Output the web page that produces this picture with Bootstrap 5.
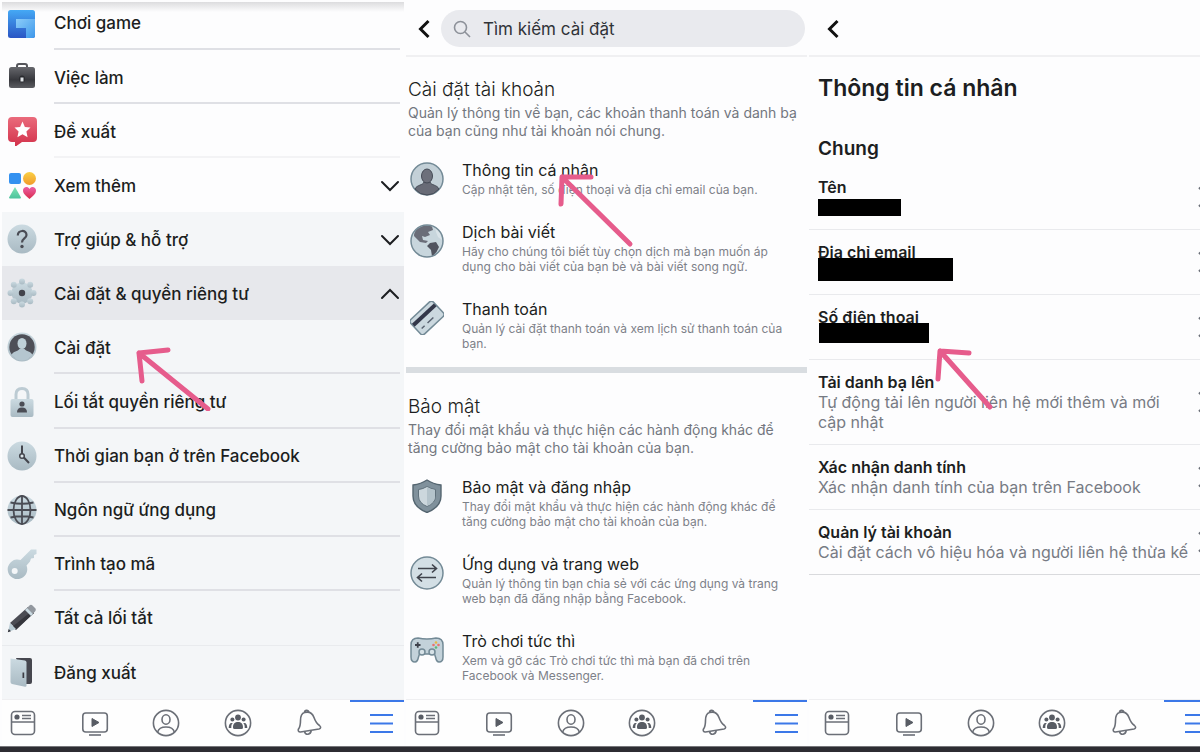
<!DOCTYPE html>
<html lang="vi">
<head>
<meta charset="utf-8">
<meta name="viewport" content="width=device-width, initial-scale=1">
<title>Cài đặt Facebook</title>
<link href="https://cdn.jsdelivr.net/npm/bootstrap@5.3.0/dist/css/bootstrap.min.css" rel="stylesheet">
<style>
  body { font-family: Inter, "Liberation Sans", sans-serif; color: #1c1e21; background: #fdfdfe; }
  a, a:hover { color: inherit; text-decoration: none; }
  .screens { display: grid; grid-template-columns: minmax(0, 402fr) minmax(0, 401fr) minmax(0, 391fr); gap: 2px; padding: 0 0 0 2px; }
  .screen-pane { min-width: 0; }
  .baseline-strip { height: 6px; background: #2d2c32; border-top: 1px solid #77777b; }
  .plain-btn { border: 0; background: none; padding: 0; color: inherit; text-align: left; }
  .pointer-arrow { position: absolute; z-index: 2; pointer-events: none; fill: none; stroke: #e65c8c; stroke-width: 5; stroke-linecap: round; stroke-linejoin: round; }

  /* menu screen */
  .menu-pane { margin-top: 2px; background: linear-gradient(#dcdcde, #fdfdfe 10px); }
  .menu-row { position: relative; flex: 1 1 54px; padding-left: 5px; font-size: 17px; line-height: 24px; width: 100%; }
  .menu-first { flex: 0 0 48px; }
  .menu-row > svg { width: 30px; height: 30px; flex: none; }
  .menu-text { flex: 1; display: flex; align-items: center; align-self: stretch; margin-left: 17px; margin-right: 4px; padding-top: 3px; border-bottom: 2px solid transparent; font-weight: 500; }
  .menu-first .menu-text { padding: 0 0 4px; }
  .menu-first > svg { margin-bottom: 5px; }
  .ruled .menu-text { border-bottom-color: #dfe0e5; }
  .ruled-faint .menu-text { border-bottom-color: #f3f3f5; }
  .menu-gray { background: #f4f6f8; }
  .menu-open { background: #e7e8ec; }
  .menu-logout { border-top: 1px solid #e9ebee; }
  .chev { width: 20px; height: 12px; fill: none; stroke: #1c1e21; stroke-width: 2; stroke-linecap: round; margin-left: auto; }
  .arrow-menu { left: 132px; top: 25px; }

  /* settings screens */
  .top-bar { height: 57px; border-bottom: 2px solid #f0f0f2; padding: 2px 2px 0 9px; }
  .back-btn svg { display: block; width: 18px; height: 22px; fill: none; stroke: #111; stroke-width: 3; }
  .search-pill { background: #e9eaee; border-radius: 19px; height: 37px; padding: 0 12px; margin-left: 8px; }
  .search-pill input { border: 0; background: none; outline: 0; width: 100%; font-size: 17px; color: #303338; padding: 2px 0 0 12px; }
  .search-pill input::placeholder { color: #303338; opacity: 1; }
  .settings-block { padding: 20px 0 16px 2px; }
  .top-bar + .settings-block { padding-top: 19px; }
  .block-title { font-size: 19px; line-height: 28px; font-weight: 300; margin: 0; }
  .block-desc { font-size: 14px; line-height: 18px; color: #73777f; margin: 0 0 18px; padding-right: 6px; }
  .set-item { position: relative; display: flex; gap: 20px; padding-left: 2px; margin-bottom: 23px; }
  .set-item:last-child { margin-bottom: 0; }
  .set-item > svg:first-child { width: 34px; height: 34px; flex: none; margin-top: 4px; margin-right: -2px; }
  .item-title { display: block; font-size: 16px; line-height: 24px; }
  .item-note { display: block; font-size: 12px; line-height: 15px; color: #7d8189; max-width: 336px; }
  .thick-rule { height: 6px; background: #d9dde1; }
  .arrow-info { left: 146px; top: 10px; }

  /* personal information screen */
  .info-pane { overflow: hidden; }
  .info-pane .top-bar { padding-left: 15px; }
  .page-title { font-size: 23px; line-height: 32px; font-weight: 600; margin: 15px 0 33px 9px; }
  .group-title { font-size: 19px; line-height: 24px; font-weight: 600; margin: 0 0 4px 9px; }
  .info-row { position: relative; display: flex; align-items: center; padding: 12px 0 12px 9px; border-bottom: 1px solid #e9eaed; font-size: 16px; line-height: 20px; }
  .info-row:last-child { border-color: #d9dadd; }
  .info-name { display: block; font-weight: 600; }
  .info-value { display: block; min-height: 20px; color: #777b84; }
  .redacted { display: block; background: #000; height: 17px; width: 83px; margin-top: 2px; }
  .redacted-mail { height: 23px; width: 135px; margin: -4px 0 1px; }
  .redacted-phone { height: 20px; width: 110px; margin: -4px 0 4px 1px; }
  .info-row > svg:last-child { width: 12px; height: 24px; flex: none; margin-right: -10px; fill: none; stroke: #6c7079; stroke-width: 2; }
  .info-row .arrow-phone { left: 124px; top: 49px; }

  /* tab bar */
  .tab-strip { height: 47px; padding: 0 9px 0 7px; border-top: 1px solid #efeff1; background: linear-gradient(#3c78e8, #3c78e8) right top / 54px 2px no-repeat #fefefe; }
  .settings-pane .tab-strip { padding-right: 7px; }
  .tab-strip svg { display: block; width: 28px; height: 28px; fill: none; stroke: #6b6f77; stroke-width: 1.6; }
  .tab-strip .tab-on { stroke: #3c78e8; stroke-width: 2; }
  .info-pane .tab-strip { margin-right: -10px; padding-left: 14px; padding-right: 0; background-size: 46px 2px; }
</style>
</head>
<body>
<svg width="0" height="0" class="position-absolute" aria-hidden="true">
  <defs>
    <linearGradient id="steel" x1="0" y1="0" x2="0" y2="1"><stop offset="0" stop-color="#cbdae1"/><stop offset="1" stop-color="#a9bac3"/></linearGradient>
    <linearGradient id="coal" x1="0" y1="0" x2="0" y2="1"><stop offset="0" stop-color="#66676c"/><stop offset=".6" stop-color="#37383d"/><stop offset="1" stop-color="#5b5c61"/></linearGradient>
    <linearGradient id="red" x1="0" y1="0" x2="0" y2="1"><stop offset="0" stop-color="#ea6b7c"/><stop offset="1" stop-color="#d2304a"/></linearGradient>
    <linearGradient id="blue" x1="0" y1="0" x2="0" y2="1"><stop offset="0" stop-color="#45a9f5"/><stop offset="1" stop-color="#2a55c4"/></linearGradient>
    <linearGradient id="sky" x1="0" y1="0" x2="1" y2="1"><stop offset="0" stop-color="#8ccdfa"/><stop offset="1" stop-color="#3d97ea"/></linearGradient>
    <linearGradient id="gold" x1="0" y1="0" x2="0" y2="1"><stop offset="0" stop-color="#fad045"/><stop offset="1" stop-color="#f19a2c"/></linearGradient>
    <linearGradient id="mint" x1="0" y1="0" x2="0" y2="1"><stop offset="0" stop-color="#7fe3b4"/><stop offset="1" stop-color="#4cc39c"/></linearGradient>
    <linearGradient id="rose" x1="0" y1="0" x2="0" y2="1"><stop offset="0" stop-color="#ec5fa6"/><stop offset="1" stop-color="#d92c4c"/></linearGradient>
    <symbol id="t-feed" viewBox="0 0 28 28"><rect x="2.500" y="2.500" width="23" height="23" rx="3.500"/><path d="M2.500 13H25.500M13 6.500H22M13 9.500H22"/><circle cx="8" cy="8" r="2.600" fill="#585c64" stroke="none"/></symbol>
    <symbol id="t-watch" viewBox="0 0 28 28"><rect x="1.800" y="4" width="24.500" height="19" rx="3"/><path d="M8 26H20"/><path d="M11 9.500L18 13.500 11 17.500Z" fill="#585c64" stroke="#585c64" stroke-width="1"/></symbol>
    <symbol id="t-user" viewBox="0 0 28 28"><circle cx="14" cy="14" r="12.600"/><ellipse cx="14" cy="10.500" rx="4" ry="4.700"/><path d="M5.700 23C6.500 19.500 9.500 18 14 18S21.500 19.500 22.300 23"/></symbol>
    <symbol id="t-group" viewBox="0 0 28 28"><circle cx="14" cy="14" r="12.600"/><g fill="#585c64" stroke="none"><circle cx="14" cy="8.500" r="2.900"/><circle cx="8.400" cy="10.500" r="2"/><circle cx="19.600" cy="10.500" r="2"/><path d="M9 18.500C9 14.500 11 13 14 13S19 14.500 19 18.500Q19 20 17.500 20H10.500Q9 20 9 18.500ZM7.800 14C5.500 14 4.800 16 4.700 19H7.300C7.300 16.500 7.400 15.200 8.800 14ZM20.200 14C22.500 14 23.200 16 23.300 19H20.700C20.700 16.500 20.600 15.200 19.200 14Z"/></g></symbol>
    <symbol id="t-bell" viewBox="0 0 28 28"><path d="M9.500 3.600C14 2.300 17.500 4.500 19 8.500C20.400 12.500 21.500 14.500 24.500 16.500C26.300 18 25.800 19.500 24 20L5.500 23C3.500 23.200 2.700 21.500 3.500 20C5.500 17.500 5.500 15.500 5.500 11.500C5.500 7.500 6.700 4.500 9.500 3.600ZM9.500 3.500C9.300 .8 13.500 .6 13.800 3.300M9.500 22.500C10.500 26.500 15.700 26.200 16.300 21.400"/></symbol>
    <symbol id="t-menu" viewBox="0 0 28 28"><path d="M3 6H26M3 14.500H26M3 23H26"/></symbol>
    <symbol id="back" viewBox="0 0 18 22"><path d="M13.500 3L5.500 11L13.500 19"/></symbol>
    <symbol id="right" viewBox="0 0 12 24"><path d="M1 2.500L10 12L1 21.500"/></symbol>
    <symbol id="down" viewBox="0 0 20 12"><path d="M2 2L10 10L18 2"/></symbol>
  </defs>
</svg>

<main class="screens">
  <!-- Menu -->
  <section class="screen-pane menu-pane d-flex flex-column" aria-label="Menu">
    <nav class="d-flex flex-column flex-fill">
      <a href="#" class="menu-row menu-first ruled d-flex align-items-center">
        <svg viewBox="0 0 30 30"><rect x="1" y="1" width="27" height="28" rx="2.500" fill="url(#blue)"/><path d="M9 10H28V26.500Q28 29 25.500 29H19V19H9Z" fill="url(#sky)"/></svg>
        <span class="menu-text">Chơi game</span></a>
      <a href="#" class="menu-row ruled d-flex align-items-center">
        <svg viewBox="0 0 30 30"><path d="M10 6V4Q10 2 12 2H18Q20 2 20 4V6" fill="none" stroke="#55565b" stroke-width="2"/><rect x="2" y="5" width="26" height="21" rx="2.500" fill="url(#coal)"/><ellipse cx="15" cy="17" rx="3" ry="3.500" fill="#2a2b2f"/><path d="M13.500 15.500h3v4h-3z" fill="#dfe3e6"/></svg>
        <span class="menu-text">Việc làm</span></a>
      <a href="#" class="menu-row ruled-faint d-flex align-items-center">
        <svg viewBox="0 0 30 30"><path d="M5 1H26Q30 1 30 5V22Q30 26 26 26H15L8 31V26H5Q1 26 1 22V5Q1 1 5 1Z" fill="url(#red)"/><path d="M15.500 5.500L17.900 11 23.500 11.600 19.400 15.500 20.600 21.200 15.500 18.200 10.400 21.200 11.600 15.500 7.500 11.600 13.100 11Z" fill="#fff"/></svg>
        <span class="menu-text">Đề xuất</span></a>
      <button type="button" class="plain-btn menu-row d-flex align-items-center">
        <svg viewBox="0 0 30 30"><rect x="2" y="3" width="12" height="11" rx="2" fill="#3491f0"/><circle cx="22.500" cy="8.500" r="6.500" fill="url(#gold)"/><path d="M8 17L14 27.500Q14 28.500 13 28.500H3Q2 28.500 2 27.500Z" fill="url(#mint)"/><path d="M22.500 19C20.500 15.500 16 17 16 20.500C16 24 19.500 26 22.500 29C25.500 26 29 24 29 20.500C29 17 24.500 15.500 22.500 19Z" fill="url(#rose)"/></svg>
        <span class="menu-text">Xem thêm<svg class="chev"><use href="#down"/></svg></span></button>
      <button type="button" class="plain-btn menu-row menu-gray d-flex align-items-center">
        <svg viewBox="0 0 30 30"><circle cx="15" cy="15" r="14.500" fill="url(#steel)"/><path d="M10.800 11.500C10.800 5.500 19.500 5.600 19.500 11C19.500 14.500 15 14.500 15 18.500" fill="none" stroke="#4b4d55" stroke-width="2.200"/><circle cx="15" cy="22.500" r="1.700" fill="#4b4d55"/></svg>
        <span class="menu-text">Trợ giúp &amp; hỗ trợ<svg class="chev"><use href="#down"/></svg></span></button>
      <button type="button" class="plain-btn menu-row menu-open d-flex align-items-center" aria-expanded="true">
        <svg viewBox="0 0 30 30"><g fill="url(#steel)"><circle cx="15" cy="15" r="10.500"/><circle cx="15" cy="3.500" r="3"/><circle cx="15" cy="26.500" r="3"/><circle cx="3.500" cy="15" r="3"/><circle cx="26.500" cy="15" r="3"/><circle cx="6.800" cy="6.800" r="3"/><circle cx="23.200" cy="6.800" r="3"/><circle cx="6.800" cy="23.200" r="3"/><circle cx="23.200" cy="23.200" r="3"/></g><circle cx="15" cy="15" r="3.200" fill="#42444c"/></svg>
        <span class="menu-text">Cài đặt &amp; quyền riêng tư<svg class="chev" viewBox="0 0 20 12"><path d="M2 10L10 2L18 10"/></svg></span></button>
      <a href="#" class="menu-row menu-gray ruled d-flex align-items-center">
        <svg viewBox="0 0 30 30"><circle cx="15" cy="15" r="14.500" fill="url(#steel)"/><circle cx="15" cy="15" r="12.700" fill="#4e4f57"/><ellipse cx="15" cy="11.500" rx="4.500" ry="5.500" fill="#bfd0d8"/><path d="M4.500 23C6 19 11 19.500 12.500 17H17.500C19 19.500 24 19 25.500 23Q21 28.500 15 28.500T4.500 23Z" fill="#b5c6cf"/></svg>
        <span class="menu-text">Cài đặt</span>
        <svg class="pointer-arrow arrow-menu" style="width:80px;height:66px" viewBox="0 0 80 66"><path d="M34 5L5 8L8 36M5 8L74 64"/></svg></a>
      <a href="#" class="menu-row menu-gray ruled d-flex align-items-center">
        <svg viewBox="0 0 30 30"><path d="M9 13V7.500Q9 1.500 15 1.500T21 7.500V13" fill="none" stroke="#bccbd3" stroke-width="3"/><rect x="3.500" y="12" width="23" height="18" rx="2" fill="url(#steel)"/><circle cx="15" cy="17" r="2.600" fill="#4b4d55"/><path d="M10 25.500Q10 20.500 15 20.500T20 25.500Z" fill="#4b4d55"/></svg>
        <span class="menu-text">Lối tắt quyền riêng tư</span></a>
      <a href="#" class="menu-row menu-gray ruled d-flex align-items-center">
        <svg viewBox="0 0 30 30"><circle cx="15" cy="15" r="14.500" fill="url(#steel)"/><path d="M15 4.500V14.500L22 22" fill="none" stroke="#44464e" stroke-width="2"/><circle cx="15" cy="15" r="2.300" fill="#dbe5ea" stroke="#44464e" stroke-width="1.500"/></svg>
        <span class="menu-text">Thời gian bạn ở trên Facebook</span></a>
      <a href="#" class="menu-row menu-gray ruled d-flex align-items-center">
        <svg viewBox="0 0 30 30"><circle cx="15" cy="15" r="14.500" fill="url(#steel)"/><g fill="none" stroke="#4a4c54" stroke-width="1.800"><ellipse cx="15" cy="15" rx="8.500" ry="14"/><path d="M15 .5V29.500M.5 15H29.500M3.500 7.500Q15 10 26.500 7.500M3.500 22.500Q15 20 26.500 22.500"/></g></svg>
        <span class="menu-text">Ngôn ngữ ứng dụng</span></a>
      <a href="#" class="menu-row menu-gray ruled d-flex align-items-center">
        <svg viewBox="0 0 30 30"><path d="M24 .5H29.500V5L27 6V9L24 9.500 23 12.500 19.500 16.500A9.800 9.800 0 1 1 13.500 11Z" fill="url(#steel)"/><circle cx="7.700" cy="22" r="3" fill="#f4f6f8"/></svg>
        <span class="menu-text">Trình tạo mã</span></a>
      <a href="#" class="menu-row menu-gray d-flex align-items-center">
        <svg viewBox="0 0 30 30"><path d="M3 20L21 4L27 10L9 26Z" fill="#4b4c54"/><path d="M5 24L25 8L27 10L9 27Z" fill="#35363d"/><path d="M19.500 5.500L22.500 2.500Q24 1 26 3L28.500 5.500Q29.500 7 28 8.500L25.500 11Z" fill="#92989f"/><path d="M18 7L20 5L26 11L24 13Z" fill="#c9d9e1"/><path d="M3 20L9 26L1 29Z" fill="#b9cbd4"/><path d="M1.700 26L4 28.200 .8 29.200Z" fill="#35363d"/></svg>
        <span class="menu-text">Tất cả lối tắt</span></a>
      <a href="#" class="menu-row menu-gray menu-logout d-flex align-items-center">
        <svg viewBox="0 0 30 30"><path d="M9 1H23Q25 1 25 3V25Q25 27 23 27H18Z" fill="#46474f"/><path d="M3.500 1.500L18 3.500Q19.500 4 19.500 5.500V28.500Q19.500 30 18 29.700L5 27Q3.500 26.500 3.500 25Z" fill="url(#steel)"/><path d="M15.500 15.500H17.200V21H15.500Z" fill="#3c3d44"/></svg>
        <span class="menu-text">Đăng xuất</span></a>
    </nav>
    <nav class="tab-strip d-flex justify-content-between align-items-center" aria-label="Thanh tab">
      <a href="#" aria-label="Bảng tin"><svg><use href="#t-feed"/></svg></a><a href="#" aria-label="Watch"><svg><use href="#t-watch"/></svg></a><a href="#" aria-label="Trang cá nhân"><svg><use href="#t-user"/></svg></a><a href="#" aria-label="Nhóm"><svg><use href="#t-group"/></svg></a><a href="#" aria-label="Thông báo"><svg><use href="#t-bell"/></svg></a><a href="#" aria-label="Menu"><svg class="tab-on"><use href="#t-menu"/></svg></a>
    </nav>
  </section>

  <!-- Settings -->
  <section class="screen-pane settings-pane d-flex flex-column" aria-label="Cài đặt">
    <header class="top-bar d-flex align-items-center">
      <button type="button" class="plain-btn back-btn" aria-label="Quay lại"><svg><use href="#back"/></svg></button>
      <label class="search-pill d-flex align-items-center flex-fill">
        <svg width="18" height="18" viewBox="0 0 18 18" class="flex-shrink-0" fill="none" stroke="#8d9199" stroke-width="1.600"><circle cx="7.500" cy="7.500" r="6"/><path d="M12 12L17 17"/></svg>
        <input type="text" placeholder="Tìm kiếm cài đặt" aria-label="Tìm kiếm cài đặt">
      </label>
    </header>
    <div class="settings-block">
      <h2 class="block-title">Cài đặt tài khoản</h2>
      <p class="block-desc pe-0">Quản lý thông tin về bạn, các khoản thanh toán và danh bạ của bạn cũng như tài khoản nói chung.</p>
      <div>
        <a href="#" class="set-item">
          <svg viewBox="0 0 34 34"><circle cx="17" cy="17" r="16" fill="#c3d0d7" stroke="#738a96" stroke-width="1.500"/><path d="M5 27C7 22.500 13 23.500 14 20H20C21 23.500 27 22.500 29 27Q24 33 17 33T5 27Z" fill="#686b76" stroke="#454b56"/><ellipse cx="17" cy="14" rx="5.500" ry="7" fill="#6d707b" stroke="#454b56"/></svg>
          <span><span class="item-title">Thông tin cá nhân</span><span class="item-note">Cập nhật tên, số điện thoại và địa chỉ email của bạn.</span></span>
          <svg class="pointer-arrow arrow-info" style="width:80px;height:80px" viewBox="0 0 80 80"><path d="M37 9H8L7 36M8 9L76 76"/></svg></a>
        <a href="#" class="set-item">
          <svg viewBox="0 0 34 34"><circle cx="17" cy="17" r="16" fill="#c8d6dd"/><path d="M8 4.500Q14 0 22 2.500L23 6 18 8 20 11 15 13 12 12 13 16 18 17 16 19 10 18 4 12Q4 7 8 4.500Z" fill="#6a6d78"/><path d="M20 19L26 18 29 23Q27 29 22 32.500L21 26 17 22Z" fill="#51545f"/><path d="M25 3Q31 8 32 16L28 13 26 8Z" fill="#dae4e9"/><circle cx="17" cy="17" r="16" fill="none" stroke="#738a96" stroke-width="1.500"/></svg>
          <span><span class="item-title">Dịch bài viết</span><span class="item-note">Hãy cho chúng tôi biết tùy chọn dịch mà bạn muốn áp<br>dụng cho bài viết của bạn bè và bài viết song ngữ.</span></span></a>
        <a href="#" class="set-item">
          <svg viewBox="0 0 34 34"><g transform="rotate(-43 17 17)"><rect x="1.500" y="7" width="31" height="20" rx="3" fill="#cbd8df" stroke="#738a96" stroke-width="1.500"/><path d="M2 11H32V15H2Z" fill="#34384a"/><path d="M6 21H10M14 21H22" stroke="#596270" stroke-width="1.500"/></g></svg>
          <span><span class="item-title">Thanh toán</span><span class="item-note">Quản lý cài đặt thanh toán và xem lịch sử thanh toán của<br>bạn.</span></span></a>
      </div>
    </div>
    <div class="thick-rule"></div>
    <div class="settings-block">
      <h2 class="block-title">Bảo mật</h2>
      <p class="block-desc">Thay đổi mật khẩu và thực hiện các hành động khác để tăng cường bảo mật cho tài khoản của bạn.</p>
      <div>
        <a href="#" class="set-item">
          <svg viewBox="0 0 34 34"><path d="M17 1Q23 5 31 6V17Q31 28 17 33.500Q3 28 3 17V6Q11 5 17 1Z" fill="#80919c" stroke="#546570" stroke-width="1.400"/><path d="M17 7.500Q21 10 25.500 10.500V17Q25.500 24 17 27.500Q8.500 24 8.500 17V10.500Q13 10 17 7.500Z" fill="#ccd7dd" stroke="#60717c"/><path d="M17 8V27Q25 23.500 25 17V11Q21 10.500 17 8Z" fill="#b4c3cb"/></svg>
          <span><span class="item-title">Bảo mật và đăng nhập</span><span class="item-note">Thay đổi mật khẩu và thực hiện các hành động khác để<br>tăng cường bảo mật cho tài khoản của bạn.</span></span></a>
        <a href="#" class="set-item">
          <svg viewBox="0 0 34 34"><circle cx="17" cy="17" r="16" fill="#d3dfe5" stroke="#738a96" stroke-width="1.500"/><path d="M8 12.500H26M22 8.500L26.500 12.500 22 16.500M26 21.500H8M12 17.500L7.500 21.500 12 25.500" fill="none" stroke="#3f434c" stroke-width="1.600"/></svg>
          <span><span class="item-title">Ứng dụng và trang web</span><span class="item-note">Quản lý thông tin bạn chia sẻ với các ứng dụng và trang<br>web bạn đã đăng nhập bằng Facebook.</span></span></a>
        <a href="#" class="set-item">
          <svg viewBox="0 0 34 34"><path d="M8 5Q17 7 26 5Q33 5 33 12V24Q33 29 29 29Q26.500 29 25.500 24L24.500 21H9.500L8.500 24Q7.500 29 5 29Q1 29 1 24V12Q1 5 8 5Z" fill="#c3d2da" stroke="#738a96" stroke-width="1.500"/><circle cx="12" cy="19" r="3" fill="#d7e2e7" stroke="#738a96" stroke-width="1.500"/><circle cx="22" cy="19" r="3" fill="#d7e2e7" stroke="#738a96" stroke-width="1.500"/><path d="M5 12H10.500M7.750 9.250V14.750" stroke="#3f434c" stroke-width="1.800"/><circle cx="26" cy="9.500" r="1.300" fill="#e7b93f"/><circle cx="26" cy="14.500" r="1.300" fill="#5bb879"/><circle cx="23.500" cy="12" r="1.300" fill="#e8736f"/><circle cx="28.500" cy="12" r="1.300" fill="#e8736f"/></svg>
          <span><span class="item-title">Trò chơi tức thì</span><span class="item-note">Xem và gỡ các Trò chơi tức thì mà bạn đã chơi trên<br>Facebook và Messenger.</span></span></a>
      </div>
    </div>
    <nav class="tab-strip mt-auto d-flex justify-content-between align-items-center" aria-label="Thanh tab">
      <a href="#" aria-label="Bảng tin"><svg><use href="#t-feed"/></svg></a><a href="#" aria-label="Watch"><svg><use href="#t-watch"/></svg></a><a href="#" aria-label="Trang cá nhân"><svg><use href="#t-user"/></svg></a><a href="#" aria-label="Nhóm"><svg><use href="#t-group"/></svg></a><a href="#" aria-label="Thông báo"><svg><use href="#t-bell"/></svg></a><a href="#" aria-label="Menu"><svg class="tab-on"><use href="#t-menu"/></svg></a>
    </nav>
  </section>

  <!-- Personal information -->
  <section class="screen-pane info-pane d-flex flex-column" aria-label="Thông tin cá nhân">
    <header class="top-bar d-flex align-items-center">
      <button type="button" class="plain-btn back-btn" aria-label="Quay lại"><svg><use href="#back"/></svg></button>
    </header>
    <h1 class="page-title">Thông tin cá nhân</h1>
    <h2 class="group-title">Chung</h2>
    <div>
      <a href="#" class="info-row"><span class="flex-fill me-2"><span class="info-name">Tên</span><span class="info-value d-flex"><span class="redacted"></span></span></span><svg><use href="#right"/></svg></a>
      <a href="#" class="info-row"><span class="flex-fill me-2"><span class="info-name">Địa chỉ email</span><span class="info-value d-flex"><span class="redacted redacted-mail position-relative"></span></span></span><svg><use href="#right"/></svg></a>
      <a href="#" class="info-row"><span class="flex-fill me-2"><span class="info-name">Số điện thoại</span><span class="info-value d-flex"><span class="redacted redacted-phone position-relative"></span></span></span>
        <svg class="pointer-arrow arrow-phone" style="width:66px;height:70px" viewBox="0 0 66 70"><path d="M36 9L7 7L5 35M7 7L57 63"/></svg>
        <svg><use href="#right"/></svg></a>
      <a href="#" class="info-row"><span class="flex-fill me-2"><span class="info-name">Tải danh bạ lên</span><span class="info-value">Tự động tải lên người liên hệ mới thêm và mới<br>cập nhật</span></span><svg><use href="#right"/></svg></a>
      <a href="#" class="info-row"><span class="flex-fill me-2"><span class="info-name">Xác nhận danh tính</span><span class="info-value">Xác nhận danh tính của bạn trên Facebook</span></span><svg><use href="#right"/></svg></a>
      <a href="#" class="info-row"><span class="flex-fill"><span class="info-name">Quản lý tài khoản</span><span class="info-value text-nowrap">Cài đặt cách vô hiệu hóa và người liên hệ thừa kế</span></span><svg><use href="#right"/></svg></a>
    </div>
    <nav class="tab-strip mt-auto d-flex justify-content-between align-items-center" aria-label="Thanh tab">
      <a href="#" aria-label="Bảng tin"><svg><use href="#t-feed"/></svg></a><a href="#" aria-label="Watch"><svg><use href="#t-watch"/></svg></a><a href="#" aria-label="Trang cá nhân"><svg><use href="#t-user"/></svg></a><a href="#" aria-label="Nhóm"><svg><use href="#t-group"/></svg></a><a href="#" aria-label="Thông báo"><svg><use href="#t-bell"/></svg></a><a href="#" aria-label="Menu"><svg class="tab-on"><use href="#t-menu"/></svg></a>
    </nav>
  </section>
</main>
<footer class="baseline-strip"></footer>
<script src="https://cdn.jsdelivr.net/npm/bootstrap@5.3.0/dist/js/bootstrap.bundle.min.js"></script>
</body>
</html>
